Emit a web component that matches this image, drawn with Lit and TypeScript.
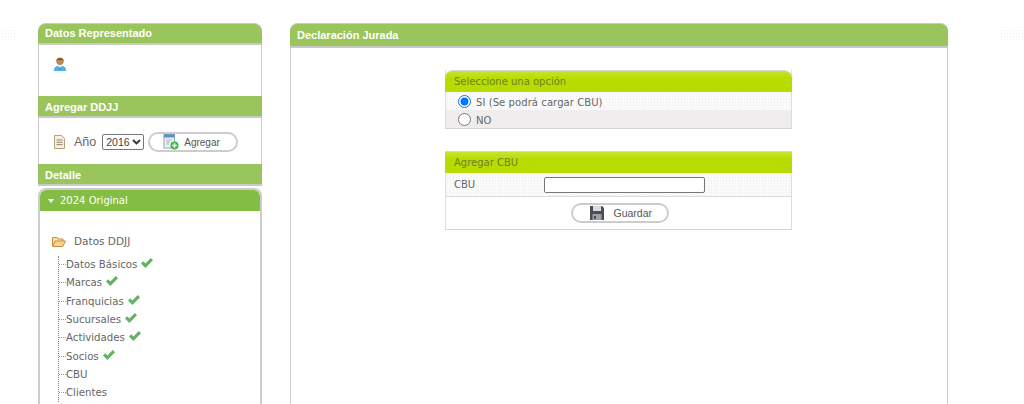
import { LitElement, html, css, svg } from "lit";
import { customElement } from "lit/decorators.js";

const check = svg`<svg class="check" width="14" height="12" viewBox="0 0 14 12"><path d="M1 6.5 L3.2 4.3 L5.4 6.5 L10.8 1 L13 3.2 L5.4 11 Z" fill="#62b262"/></svg>`;

const items: [string, boolean][] = [
  ["Datos Básicos", true],
  ["Marcas", true],
  ["Franquicias", true],
  ["Sucursales", true],
  ["Actividades", true],
  ["Socios", true],
  ["CBU", false],
  ["Clientes", false],
];

@customElement("app-root")
export class AppRoot extends LitElement {
  static styles = css`
    :host { display: block; width: 1024px; height: 404px; overflow: hidden; background: #fff; position: relative; font-family: "DejaVu Sans", Verdana, sans-serif; }
    .noise { position: absolute; top: 29px; width: 24px; height: 12px; background-image: radial-gradient(#eeeeee 0.7px, transparent 0.8px); background-size: 3px 3px; }
    .noise.l { left: -8px; }
    .noise.r { left: 1000px; }
    .page { display: flex; gap: 28px; padding: 23px 0 0 38px; height: 381px; overflow: hidden; }
    .side { width: 224px; flex: none; display: flex; flex-direction: column; }
    .main { width: 658px; flex: none; display: flex; flex-direction: column; border-left: 1px solid #ccc; border-right: 1px solid #ccc; box-sizing: border-box; align-items: center; height: 400px; border-radius: 8px 8px 0 0; }
    .bar { box-sizing: border-box; background: #9ac45c; color: #fff; font: bold 11px "Liberation Sans", Arial, sans-serif; height: 22px; padding: 1px 0 0 7px; display: flex; align-items: center; border-bottom: 2px solid #c9c9c9; flex: none; }
    .bar.top { border-radius: 8px 8px 0 0; border-top: 1px solid #c9c9c9; padding: 0 0 1px 7px; }
    .main .bar { align-self: stretch; margin: 0 -1px; height: 25px; padding: 0 0 0 7px; }
    .box { box-sizing: border-box; border-left: 1px solid #ccc; border-right: 1px solid #ccc; }
    .rep { height: 51px; padding: 11px 0 0 14px; }
    .add { height: 46px; display: flex; align-items: center; padding: 2px 0 0 15px; font: 12px "Liberation Sans", Arial, sans-serif; color: #666; }
    .add .lbl { margin: 0 6px 0 9px; font-size: 12.5px; }
    .sel { position: relative; display: inline-flex; margin-right: 4px; }
    select { appearance: none; width: 42px; height: 16px; font: 10.5px "Liberation Sans", Arial, sans-serif; color: #444; padding: 0 0 0 3px; margin: 0; background: #fff; border: 1px solid #767676; border-radius: 2px; box-sizing: border-box; }
    .chev { position: absolute; right: 3px; top: 5px; pointer-events: none; }
    .btn { box-sizing: border-box; border: 2px solid #ccc; border-radius: 11px; background: #fff; height: 20px; display: inline-flex; align-items: center; font: 10px "Liberation Sans", Arial, sans-serif; color: #555; padding: 0; }
    .btn.a { width: 90px; padding-left: 13px; gap: 5px; }
    .btn.g { width: 98px; padding-left: 17px; gap: 10px; font-weight: 400; font-size: 10.5px; margin-left: 2px; }
    .acc { margin-top: 2px; flex: 1; border: 2px solid #ccc; border-bottom: 0; border-radius: 8px 8px 0 0; overflow: hidden; }
    .acc-h { height: 21px; background: #84bd43; color: #fff; font-size: 10px; display: flex; align-items: center; padding-left: 8px; gap: 6px; border-radius: 6px 6px 0 0; }
    .tri { width: 0; height: 0; border-left: 3.5px solid transparent; border-right: 3.5px solid transparent; border-top: 4px solid #fff; }
    .tree { padding: 21px 0 0 12px; color: #666; font-size: 10.5px; }
    .root { display: flex; align-items: center; gap: 8px; height: 18px; }
    .list { list-style: none; margin: 5.5px 0 0 6px; padding: 0; border-left: 1px dotted #888; font-size: 10.2px; }
    .list li { height: 18.3px; display: flex; align-items: center; white-space: nowrap; }
    .list li::before { content: ""; width: 7px; border-top: 1px dotted #999; flex: none; }
    .check { margin-left: 3px; margin-top: -3px; }
    .card { width: 347px; margin-right: 1px; box-sizing: border-box; font-size: 10px; color: #666; border-bottom: 1px solid #d4d4d4; border-left: 1px solid #ddd; border-right: 1px solid #ddd; }
    .card.one { margin-top: 22px; }
    .card.two { margin-top: 22px; }
    .hd { background: linear-gradient(#c6e52e, #b9dc00 35%); color: #6d7f28; height: 22px; margin: 0 -1px; padding-left: 9px; display: flex; align-items: center; border-top: 1px solid #d8d8d8; box-sizing: border-box; }
    .one .hd { border-radius: 8px 8px 0 0; }
    .row { display: flex; align-items: center; box-sizing: border-box; }
    .dots { background-color: #fafafa; background-image: radial-gradient(#ededed 0.6px, transparent 0.7px); background-size: 3px 3px; }
    .grey { background: #efeded; }
    .r1 { height: 18px; padding-left: 12px; gap: 5px; }
    .r2 { height: 18px; padding-left: 12px; gap: 5px; }
    .r1 span, .r2 span { padding-top: 3px; letter-spacing: 0.08px; }
    input[type="radio"] { margin: 0; width: 13px; height: 13px; flex: none; }
    .r3 { height: 24px; padding-left: 8px; border-bottom: 1px solid #ddd; }
    .r3 span { width: 90px; }
    input[type="text"] { box-sizing: border-box; width: 161px; height: 16px; border: 1px solid #767676; border-radius: 2px; background: #fff; padding: 0; margin: 0; }
    .r4 { height: 32px; justify-content: center; }
  `;

  render() {
    return html`
      <div class="noise l"></div>
      <div class="noise r"></div>
      <div class="page">
        <div class="side">
          <div class="bar top">Datos Representado</div>
          <div class="box rep">
            <svg width="14" height="16" viewBox="0 0 16 18" preserveAspectRatio="none">
              <path d="M1 17 C1 12 4 11 8 11 C12 11 15 12 15 17 Z" fill="#4db2ec"/>
              <path d="M6 11 L8 14 L10 11 Z" fill="#fff"/>
              <path d="M7.6 12.5 h.8 v3 h-.8 z" fill="#39566b"/>
              <circle cx="8" cy="6" r="4.2" fill="#b98a52"/>
              <path d="M3.6 6 C3.4 1.5 12.6 1.5 12.4 6 L11.2 4.4 H4.8 Z" fill="#7a4e22"/>
            </svg>
          </div>
          <div class="bar">Agregar DDJJ</div>
          <div class="box add">
            <svg width="11" height="14" viewBox="0 0 11 14">
              <path d="M.5 .5 H7.5 L10.5 3.5 V13.5 H.5 Z" fill="#f7efdc" stroke="#b9a27a"/>
              <path d="M2.5 5 H8.5 M2.5 7.3 H8.5 M2.5 9.6 H8.5" stroke="#8a8a7a"/>
            </svg>
            <span class="lbl">Año</span>
            <span class="sel">
              <select><option>2016</option></select>
              <svg class="chev" width="9" height="6" viewBox="0 0 9 6"><path d="M1 1 L4.5 4.5 L8 1" fill="none" stroke="#333" stroke-width="1.8"/></svg>
            </span>
            <span class="btn a">
              <svg width="16" height="16" viewBox="0 0 16 16">
                <rect x="1" y=".5" width="10.5" height="13.5" fill="#eef2f6" stroke="#8ea2b5"/>
                <rect x="1" y=".5" width="10.5" height="3" fill="#5b8fc7"/>
                <path d="M3 6 H9 M3 8 H7 M3 10 H6" stroke="#a9b5c0"/>
                <circle cx="11.5" cy="11.5" r="4" fill="#3fb54a"/>
                <path d="M9.3 11.5 H13.7 M11.5 9.3 V13.7" stroke="#fff" stroke-width="1.4"/>
              </svg>
              <span>Agregar</span>
            </span>
          </div>
          <div class="bar">Detalle</div>
          <div class="acc">
            <div class="acc-h"><span class="tri"></span><span>2024 Original</span></div>
            <div class="tree">
              <div class="root">
                <svg width="14" height="11" viewBox="0 0 14 11">
                  <path d="M.5 10 V1.5 H5 L6 3 H11 V5" fill="#fbe3b0" stroke="#c98a3a"/>
                  <path d="M.7 10.5 L3 5 H13.5 L10.8 10.5 Z" fill="#f9d68c" stroke="#c98a3a"/>
                </svg>
                <span>Datos DDJJ</span>
              </div>
              <ul class="list">
                ${items.map(([t, ok]) => html`<li><span>${t}</span>${ok ? check : ""}</li>`)}
              </ul>
            </div>
          </div>
        </div>
        <div class="main">
          <div class="bar top">Declaración Jurada</div>
          <div class="card one">
            <div class="hd">Seleccione una opción</div>
            <label class="row dots r1"><input type="radio" name="o" checked /><span>SI (Se podrá cargar CBU)</span></label>
            <label class="row grey r2"><input type="radio" name="o" /><span>NO</span></label>
          </div>
          <div class="card two">
            <div class="hd">Agregar CBU</div>
            <div class="row dots r3"><span>CBU</span><input type="text" /></div>
            <div class="row r4">
              <span class="btn g">
                <svg width="14" height="14" viewBox="0 0 14 14">
                  <path d="M0 0 H12 L14 2 V14 H0 Z" fill="#4a4f55"/>
                  <rect x="3" y="0" width="8" height="5" fill="#d8dde2"/>
                  <rect x="2.5" y="8" width="9" height="6" fill="#9aa1a8"/>
                  <rect x="4" y="10" width="2" height="3" fill="#4a4f55"/>
                </svg>
                <span>Guardar</span>
              </span>
            </div>
          </div>
        </div>
      </div>
    `;
  }
}
